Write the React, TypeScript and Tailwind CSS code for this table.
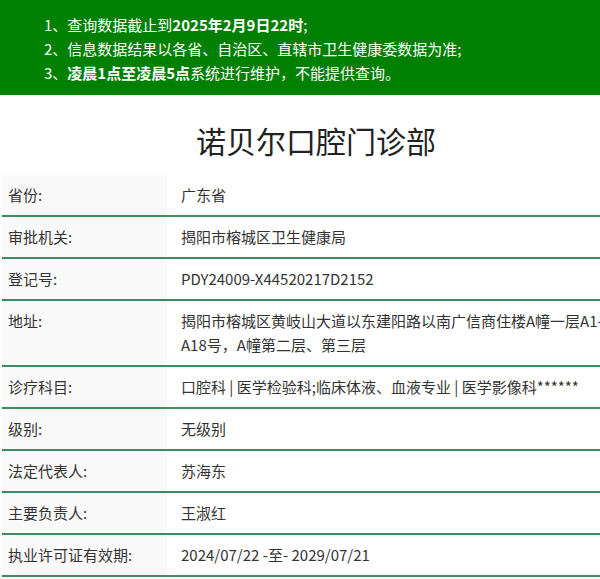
import React from 'react';

const rows: { label: string; value: string }[] = [
  { label: '省份:', value: '广东省' },
  { label: '审批机关:', value: '揭阳市榕城区卫生健康局' },
  { label: '登记号:', value: 'PDY24009-X44520217D2152' },
  { label: '地址:', value: '揭阳市榕城区黄岐山大道以东建阳路以南广信商住楼A幢一层A1-A18号，A幢第二层、第三层' },
  { label: '诊疗科目:', value: '口腔科 | 医学检验科;临床体液、血液专业 | 医学影像科******' },
  { label: '级别:', value: '无级别' },
  { label: '法定代表人:', value: '苏海东' },
  { label: '主要负责人:', value: '王淑红' },
  { label: '执业许可证有效期:', value: '2024/07/22 -至- 2029/07/21' },
];

const App: React.FC = () => {
  return (
    <div
      className="w-[600px] h-[579px] overflow-hidden bg-white text-[#333]"
      style={{ fontFamily: '"Noto Sans CJK SC", "Noto Sans", sans-serif' }}
    >
      {/* 提示信息 */}
      <div className="bg-[#008000] text-white text-[15px] leading-[24px] pt-[13px] pl-[44px] h-[95px]">
        <p>
          1、查询数据截止到<span className="font-bold">2025年2月9日22时</span>;
        </p>
        <p>2、信息数据结果以各省、自治区、直辖市卫生健康委数据为准;</p>
        <p>
          3、<span className="font-bold">凌晨1点至凌晨5点</span>系统进行维护，不能提供查询。
        </p>
      </div>

      <h1 className="text-[30px] leading-[40px] text-center text-[#222] pt-[25px] pb-[15px] w-[632px]">
        诺贝尔口腔门诊部
      </h1>

      <div className="w-[630px] pl-[2px]">
        {rows.map((row) => (
          <div key={row.label} className="flex border-b-2 border-[#3f8b60] text-[15px] leading-[24px]">
            <div className="w-[165px] shrink-0 bg-[#f9f9f9] pl-[6px] py-[8px]">{row.label}</div>
            <div className="flex-1 pl-[14px] pr-[8px] py-[8px]">{row.value}</div>
          </div>
        ))}
      </div>
    </div>
  );
};

export default App;
